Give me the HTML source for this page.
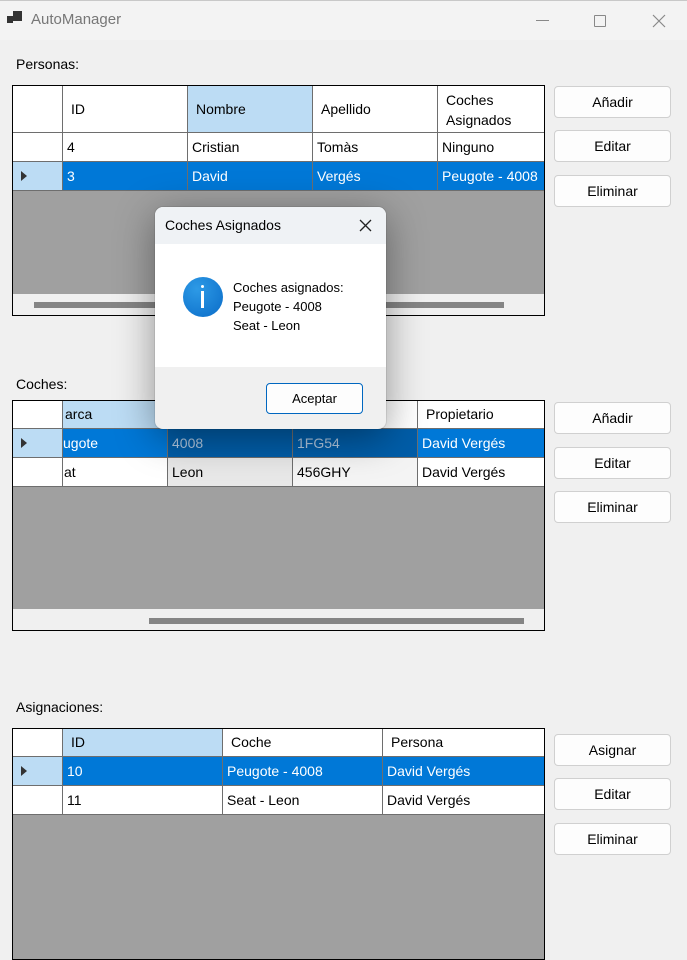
<!DOCTYPE html>
<html><head><meta charset="utf-8">
<style>
*{box-sizing:border-box;margin:0;padding:0}
body{width:687px;height:960px;background:#f0f0f0;font-family:"Liberation Sans",sans-serif;font-size:14px;color:#000;position:relative;overflow:hidden}
.a{position:absolute}
.title{left:0;top:0;width:687px;height:40px;background:#f3f3f3;border-top:1px solid #c8c8c8}
.grid{position:absolute;border:1px solid #000;background:#a0a0a0;overflow:hidden}
.c{position:absolute;border-right:1px solid #6e6e6e;border-bottom:1px solid #6e6e6e;background:#fff;padding-left:4px;white-space:nowrap;overflow:hidden;line-height:28px;font-size:14px}
.h{padding-left:8px}
.sel{background:#0078d7;color:#fff}
.hs{background:#bcdcf4}
.rh{background:#fff}
.rhs{background:#bcdcf4}
.btn{position:absolute;left:554px;width:117px;height:32px;background:#fdfdfd;border:1px solid #d0d0d0;border-radius:4px;text-align:center;line-height:30px;font-size:14px}
.arrow{position:absolute;left:8px;top:9px;width:0;height:0;border-top:5px solid transparent;border-bottom:5px solid transparent;border-left:6px solid #333}
.lbl{position:absolute;left:16px;font-size:14px}
.sb{position:absolute;background:#f0f0f0}
.th{position:absolute;height:6px;background:#858585}
</style></head><body>
<div class="a title"></div>
<div class="a" style="left:7px;top:16px;width:6px;height:7px;background:#333"></div>
<div class="a" style="left:13px;top:11px;width:9px;height:10px;background:#333"></div>
<div class="a" style="left:31px;top:11px;font-size:15px;color:#777">AutoManager</div>
<div class="a" style="left:536px;top:20px;width:13px;height:1px;background:#888"></div>
<div class="a" style="left:594px;top:15px;width:12px;height:12px;border:1px solid #888;border-radius:1px"></div>
<svg class="a" style="left:652px;top:14px" width="14" height="14"><path d="M1 1L13 13M13 1L1 13" stroke="#888" stroke-width="1.2"/></svg>

<div class="lbl" style="top:56px">Personas:</div>
<div class="grid" style="left:12px;top:85px;width:533px;height:231px">
 <div class="c rh" style="left:0;top:0;width:50px;height:47px"></div>
 <div class="c h" style="left:50px;top:0;width:125px;height:47px;line-height:46px">ID</div>
 <div class="c h hs" style="left:175px;top:0;width:125px;height:47px;line-height:46px">Nombre</div>
 <div class="c h" style="left:300px;top:0;width:125px;height:47px;line-height:46px">Apellido</div>
 <div class="c h" style="left:425px;top:0;width:110px;height:47px;line-height:20px;padding-top:4px">Coches<br>Asignados</div>
 <div class="c rh" style="left:0;top:47px;width:50px;height:29px"></div>
 <div class="c" style="left:50px;top:47px;width:125px;height:29px">4</div>
 <div class="c" style="left:175px;top:47px;width:125px;height:29px">Cristian</div>
 <div class="c" style="left:300px;top:47px;width:125px;height:29px">Tomàs</div>
 <div class="c" style="left:425px;top:47px;width:110px;height:29px">Ninguno</div>
 <div class="c rhs" style="left:0;top:76px;width:50px;height:29px"><div class="arrow"></div></div>
 <div class="c sel" style="left:50px;top:76px;width:125px;height:29px">3</div>
 <div class="c sel" style="left:175px;top:76px;width:125px;height:29px">David</div>
 <div class="c sel" style="left:300px;top:76px;width:125px;height:29px">Vergés</div>
 <div class="c sel" style="left:425px;top:76px;width:110px;height:29px">Peugote - 4008</div>
 <div class="sb" style="left:0;top:208px;width:533px;height:22px"></div>
 <div class="th" style="left:21px;top:216px;width:470px"></div>
</div>
<div class="btn" style="top:86px">Añadir</div>
<div class="btn" style="top:130px">Editar</div>
<div class="btn" style="top:175px">Eliminar</div>

<div class="lbl" style="top:376px">Coches:</div>
<div class="grid" style="left:12px;top:400px;width:533px;height:231px">
 <div class="c rh" style="left:0;top:0;width:50px;height:28px"></div>
 <div class="c hs" style="left:50px;top:0;width:105px;height:28px;padding-left:2px;line-height:27px">arca</div>
 <div class="c h" style="left:155px;top:0;width:125px;height:28px"></div>
 <div class="c h" style="left:280px;top:0;width:125px;height:28px"></div>
 <div class="c h" style="left:405px;top:0;width:130px;height:28px;line-height:27px">Propietario</div>
 <div class="c rhs" style="left:0;top:28px;width:50px;height:29px"><div class="arrow"></div></div>
 <div class="c sel" style="left:50px;top:28px;width:105px;height:29px;padding-left:0">ugote</div>
 <div class="c sel" style="left:155px;top:28px;width:125px;height:29px;background:#005da8;color:#b0c8e0">4008</div>
 <div class="c sel" style="left:280px;top:28px;width:125px;height:29px;background:#005da8;color:#b0c8e0">1FG54</div>
 <div class="c sel" style="left:405px;top:28px;width:130px;height:29px">David Vergés</div>
 <div class="c rh" style="left:0;top:57px;width:50px;height:29px"></div>
 <div class="c" style="left:50px;top:57px;width:105px;height:29px;padding-left:1px">at</div>
 <div class="c" style="left:155px;top:57px;width:125px;height:29px;background:#e8e8e8">Leon</div>
 <div class="c" style="left:280px;top:57px;width:125px;height:29px;background:#f4f4f4">456GHY</div>
 <div class="c" style="left:405px;top:57px;width:130px;height:29px">David Vergés</div>
 <div class="sb" style="left:0;top:208px;width:533px;height:22px"></div>
 <div class="th" style="left:136px;top:217px;width:375px"></div>
</div>
<div class="btn" style="top:402px">Añadir</div>
<div class="btn" style="top:447px">Editar</div>
<div class="btn" style="top:491px">Eliminar</div>

<div class="lbl" style="top:699px">Asignaciones:</div>
<div class="grid" style="left:12px;top:728px;width:533px;height:232px">
 <div class="c rh" style="left:0;top:0;width:50px;height:28px"></div>
 <div class="c h hs" style="left:50px;top:0;width:160px;height:28px;line-height:27px">ID</div>
 <div class="c h" style="left:210px;top:0;width:160px;height:28px;line-height:27px">Coche</div>
 <div class="c h" style="left:370px;top:0;width:165px;height:28px;line-height:27px">Persona</div>
 <div class="c rhs" style="left:0;top:28px;width:50px;height:29px"><div class="arrow"></div></div>
 <div class="c sel" style="left:50px;top:28px;width:160px;height:29px">10</div>
 <div class="c sel" style="left:210px;top:28px;width:160px;height:29px">Peugote - 4008</div>
 <div class="c sel" style="left:370px;top:28px;width:165px;height:29px">David Vergés</div>
 <div class="c rh" style="left:0;top:57px;width:50px;height:29px"></div>
 <div class="c" style="left:50px;top:57px;width:160px;height:29px">11</div>
 <div class="c" style="left:210px;top:57px;width:160px;height:29px">Seat - Leon</div>
 <div class="c" style="left:370px;top:57px;width:165px;height:29px">David Vergés</div>
</div>
<div class="btn" style="top:734px">Asignar</div>
<div class="btn" style="top:778px">Editar</div>
<div class="btn" style="top:823px">Eliminar</div>

<div class="a" style="left:155px;top:207px;width:231px;height:222px;border-radius:8px;overflow:hidden;box-shadow:0 8px 40px rgba(0,0,0,.4),0 0 0 1px rgba(0,0,0,.08);background:#f0f0f0">
 <div class="a" style="left:0;top:0;width:231px;height:37px;background:#eff2f5"></div>
 <div class="a" style="left:10px;top:10px;font-size:14px">Coches Asignados</div>
 <svg class="a" style="left:204px;top:12px" width="13" height="13"><path d="M1 1L12 12M12 1L1 12" stroke="#222" stroke-width="1.3"/></svg>
 <div class="a" style="left:0;top:37px;width:231px;height:123px;background:#fff"></div>
 <div class="a" style="left:28px;top:70px;width:40px;height:40px;border-radius:50%;background:radial-gradient(circle at 35% 30%,#2d9ae6,#0a6cc8)"></div>
 <div class="a" style="left:46px;top:78px;width:3px;height:3px;background:#fff;border-radius:50%"></div>
 <div class="a" style="left:46px;top:84px;width:3px;height:17px;background:#fff"></div>
 <div class="a" style="left:78px;top:71px;font-size:13px;line-height:19px">Coches asignados:<br>Peugote - 4008<br>Seat - Leon</div>
 <div class="a" style="left:111px;top:176px;width:97px;height:31px;border:1px solid #0067c0;border-radius:4px;background:#fdfdfd;text-align:center;line-height:29px;font-size:13px">Aceptar</div>
</div>
</body></html>
